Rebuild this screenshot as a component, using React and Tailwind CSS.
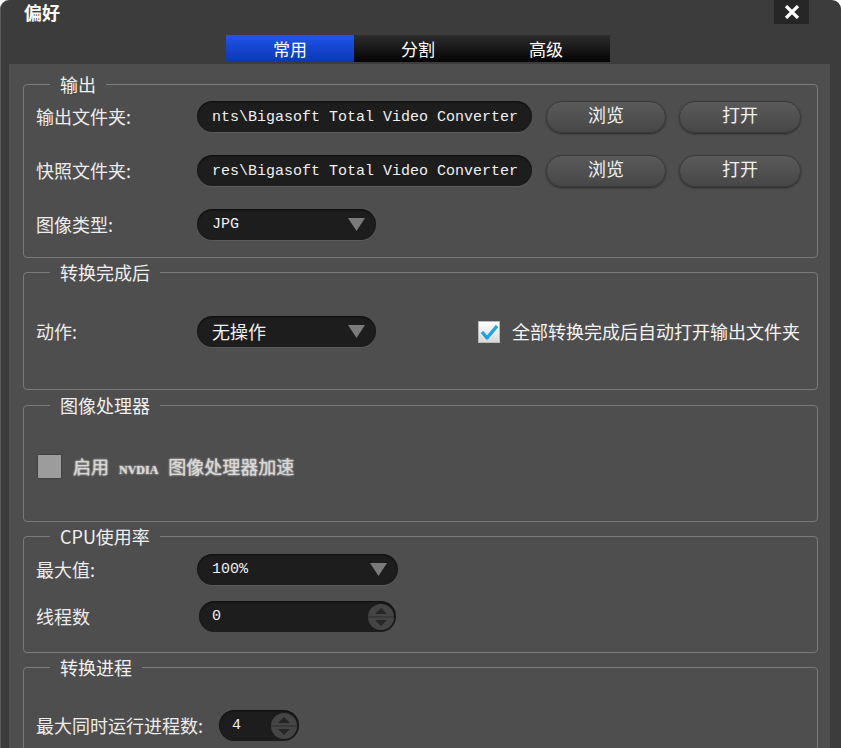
const cjk = { fontFamily: '"Noto Sans CJK SC", "Noto Sans", sans-serif' };
const mono = { fontFamily: '"Liberation Mono", "Noto Sans CJK SC", monospace' };

function Arrow() {
  return (
    <svg width="17" height="13" viewBox="0 0 17 13">
      <path d="M0 0 H17 L8.5 13 Z" fill="#7b7b7b" />
    </svg>
  );
}

function SpinKnob() {
  return (
    <svg width="28" height="28" viewBox="0 0 28 28">
      <circle cx="14" cy="14" r="13" fill="#454545" />
      <path d="M1 14 H27" stroke="#2e2e2e" strokeWidth="1" />
      <path d="M8 11 L14 5 L20 11 Z" fill="#262626" />
      <path d="M8 17 L14 23 L20 17 Z" fill="#262626" />
    </svg>
  );
}

function Field({ text, width }) {
  return (
    <div
      className={`${width} h-[31px] rounded-full bg-[#1d1d1d] shadow-[inset_0_1px_2px_rgba(0,0,0,0.6),0_1px_0_rgba(255,255,255,0.08)] flex items-center pl-[15px] pt-[3px] text-[15px] text-[#f0f0f0] overflow-hidden whitespace-nowrap`}
      style={mono}
    >
      {text}
    </div>
  );
}

function Select({ text, width, cjkText }) {
  return (
    <div
      className={`${width} h-[31px] rounded-full bg-[#1d1d1d] shadow-[inset_0_1px_2px_rgba(0,0,0,0.6),0_1px_0_rgba(255,255,255,0.08)] flex items-center justify-between pl-[15px] pr-[11px] text-[#f0f0f0]`}
    >
      <span className={cjkText ? "text-[18px]" : "text-[15px] pt-[2px]"} style={cjkText ? cjk : mono}>
        {text}
      </span>
      <Arrow />
    </div>
  );
}

function Spinner({ text, width }) {
  return (
    <div
      className={`${width} h-[31px] rounded-full bg-[#1d1d1d] shadow-[inset_0_1px_2px_rgba(0,0,0,0.6)] flex items-center justify-between pl-[13px] pr-[1px] text-[15px] text-[#f0f0f0]`}
      style={mono}
    >
      <span className="pt-[2px]">{text}</span>
      <SpinKnob />
    </div>
  );
}

function Button({ label, width }) {
  return (
    <button
      className={`${width} h-[32px] rounded-full bg-gradient-to-b from-[#5a5a5a] to-[#474747] border border-[#3a3a3a] shadow-[0_1px_2px_rgba(0,0,0,0.5)] text-[18px] text-[#f0f0f0] leading-none pb-[5px]`}
      style={cjk}
    >
      {label}
    </button>
  );
}

function Group({ title, height, className = "", children }) {
  return (
    <fieldset
      className={`${height} ${className} border border-[#7a7a7a] rounded-[4px] pl-[12px] shrink-0`}
    >
      <legend className="ml-[14px] px-[10px] h-[20px] leading-[20px] text-[18px] text-[#f0f0f0]" style={cjk}>
        {title}
      </legend>
      {children}
    </fieldset>
  );
}

function Label({ children, w = "w-[161px]" }) {
  return (
    <span className={`${w} shrink-0 text-[18px] text-[#ececec]`} style={cjk}>
      {children}
    </span>
  );
}

export default function App() {
  return (
    <div className="w-[841px] h-[748px] bg-white overflow-hidden">
      <div className="h-full rounded-t-[9px] bg-[#3c3c3c] border-l border-[#5c5c5c] flex flex-col">
        <div className="h-[35px] shrink-0 flex items-start justify-between pl-[23px] pr-[32px]">
          <span className="text-[18px] font-bold text-white leading-[24px]" style={cjk}>
            偏好
          </span>
          <div className="w-[35px] h-[24px] bg-[#262626] flex items-center justify-center">
            <svg width="16" height="14" viewBox="0 0 16 14">
              <path d="M2 1 L14 13 M14 1 L2 13" stroke="#ffffff" strokeWidth="3.2" />
            </svg>
          </div>
        </div>

        <div className="h-[27px] shrink-0 ml-[225px] flex">
          <div className="w-[128px] h-full bg-gradient-to-b from-[#1f55e8] to-[#0c36b6] flex items-center justify-center text-[17px] text-white" style={cjk}>
            常用
          </div>
          <div className="w-[128px] h-full bg-gradient-to-b from-[#2e2e2e] to-[#050505] flex items-center justify-center text-[17px] text-white" style={cjk}>
            分割
          </div>
          <div className="w-[128px] h-full bg-gradient-to-b from-[#2e2e2e] to-[#050505] flex items-center justify-center text-[17px] text-white" style={cjk}>
            高级
          </div>
        </div>

        <div className="flex-1 mt-[2px] ml-[8px] mr-[11px] bg-[#4e4e4e] pt-[10px] pl-[14px] pr-[12px] overflow-hidden flex flex-col">
          <Group title="输出" height="h-[184px]">
            <div className="pt-[7px] flex flex-col gap-[23px]">
              <div className="flex items-center h-[31px]">
                <Label>输出文件夹:</Label>
                <Field text="nts\Bigasoft Total Video Converter" width="w-[335px]" />
                <div className="ml-[14px]"><Button label="浏览" width="w-[120px]" /></div>
                <div className="ml-[13px]"><Button label="打开" width="w-[122px]" /></div>
              </div>
              <div className="flex items-center h-[31px]">
                <Label>快照文件夹:</Label>
                <Field text="res\Bigasoft Total Video Converter" width="w-[335px]" />
                <div className="ml-[14px]"><Button label="浏览" width="w-[120px]" /></div>
                <div className="ml-[13px]"><Button label="打开" width="w-[122px]" /></div>
              </div>
              <div className="flex items-center h-[31px]">
                <Label>图像类型:</Label>
                <Select text="JPG" width="w-[179px]" />
              </div>
            </div>
          </Group>

          <Group title="转换完成后" height="h-[128px]" className="mt-[4px]">
            <div className="pt-[34px] pr-[17px] flex items-center h-[65px]">
              <Label>动作:</Label>
              <Select text="无操作" width="w-[179px]" cjkText />
              <div className="ml-auto flex items-center gap-[12px]">
                <div className="w-[22px] h-[22px] bg-gradient-to-b from-[#ffffff] to-[#d8d8d8] border border-[#bbbbbb] flex items-center justify-center">
                  <svg width="18" height="16" viewBox="0 0 18 16">
                    <path d="M2 8 L7 14 L17 2" fill="none" stroke="#1ea3e8" strokeWidth="3.4" strokeLinejoin="round" />
                  </svg>
                </div>
                <span className="text-[18px] text-[#f4f4f4]" style={cjk}>
                  全部转换完成后自动打开输出文件夹
                </span>
              </div>
            </div>
          </Group>

          <Group title="图像处理器" height="h-[127px]" className="mt-[5px]">
            <div className="pt-[38px] flex items-center gap-[12px] pl-[2px]">
              <div className="w-[23px] h-[23px] bg-[#9c9c9c] shadow-[0_0_2px_rgba(0,0,0,0.4)]" />
              <span
                className="text-[18px] text-[#d8d8d8] [text-shadow:0_0_2px_#ffffff] flex items-baseline gap-[10px]"
                style={cjk}
              >
                <span>启用</span>
                <span className="text-[12px] font-bold" style={{ fontFamily: '"Liberation Serif", serif' }}>NVDIA</span>
                <span>图像处理器加速</span>
              </span>
            </div>
          </Group>

          <Group title="CPU使用率" height="h-[127px]" className="mt-[4px]">
            <div className="pt-[8px] flex flex-col gap-[16px]">
              <div className="flex items-center h-[31px]">
                <Label>最大值:</Label>
                <Select text="100%" width="w-[201px]" />
              </div>
              <div className="flex items-center h-[31px]">
                <Label w="w-[163px]">线程数</Label>
                <Spinner text="0" width="w-[197px]" />
              </div>
            </div>
          </Group>

          <Group title="转换进程" height="h-[140px]" className="mt-[4px]">
            <div className="pt-[33px] flex items-center h-[64px]">
              <Label w="w-[183px]">最大同时运行进程数:</Label>
              <Spinner text="4" width="w-[80px]" />
            </div>
          </Group>
        </div>
      </div>
    </div>
  );
}
